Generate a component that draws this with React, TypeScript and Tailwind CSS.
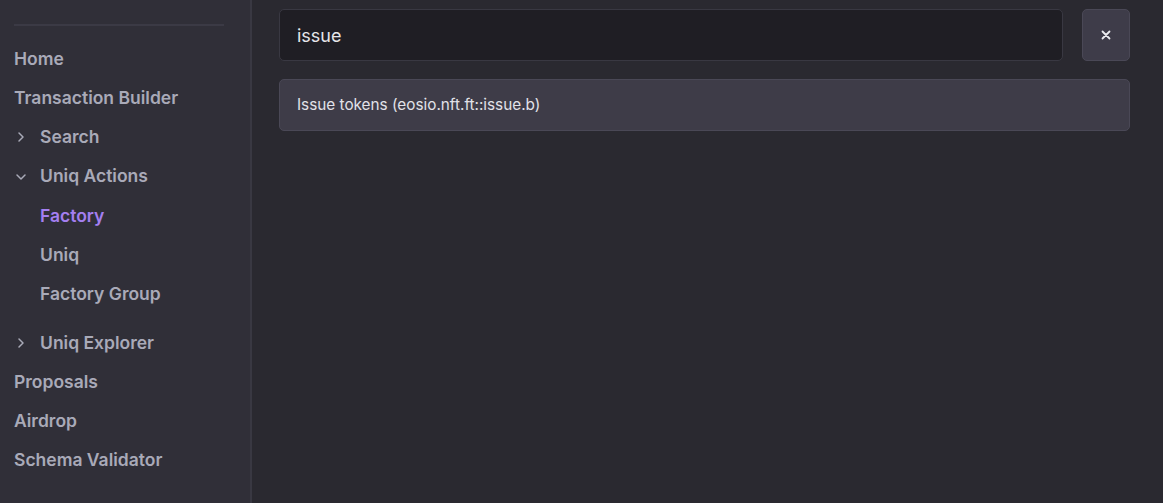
import React from 'react';

type Item = { label: string; level: 0 | 1; chevron?: 'right' | 'down'; active?: boolean; gapAfter?: boolean };

const NAV: Item[] = [
  { label: 'Home', level: 0 },
  { label: 'Transaction Builder', level: 0 },
  { label: 'Search', level: 0, chevron: 'right' },
  { label: 'Uniq Actions', level: 0, chevron: 'down' },
  { label: 'Factory', level: 1, active: true },
  { label: 'Uniq', level: 1 },
  { label: 'Factory Group', level: 1, gapAfter: true },
  { label: 'Uniq Explorer', level: 0, chevron: 'right' },
  { label: 'Proposals', level: 0 },
  { label: 'Airdrop', level: 0 },
  { label: 'Schema Validator', level: 0 },
];

function Chevron({ dir }: { dir: 'right' | 'down' }) {
  return (
    <svg width="14" height="14" viewBox="0 0 14 14" fill="none" className="shrink-0">
      {dir === 'right' ? (
        <path d="M5 3 L9 7 L5 11" stroke="#a9aab8" strokeWidth="1.5" strokeLinecap="round" strokeLinejoin="round" />
      ) : (
        <path d="M3 5 L7 9 L11 5" stroke="#a9aab8" strokeWidth="1.5" strokeLinecap="round" strokeLinejoin="round" />
      )}
    </svg>
  );
}

export default function App() {
  return (
    <div className="flex w-[1163px] h-[503px] bg-[#2a2930] overflow-hidden" style={{ fontFamily: 'Inter, "Noto Sans", sans-serif' }}>
      {/* Sidebar */}
      <aside className="w-[252px] shrink-0 bg-[#302f38] border-r-2 border-[#393842] px-[14px] pt-6">
        <div className="w-[210px] h-[2px] bg-[#3b3a45]" />
        <nav className="mt-[13px]">
          {NAV.map(item => (
            <div
              key={item.label}
              className={`flex items-center h-[39.3px] text-[17.5px] font-semibold ${item.gapAfter ? 'mb-[9px]' : ''} ${
                item.active ? 'text-[#a47ff0]' : 'text-[#a9aab8]'
              } ${item.level === 1 ? 'pl-[26px]' : ''}`}
            >
              {item.chevron && (
                <span className="w-[26px] flex items-center">
                  <Chevron dir={item.chevron} />
                </span>
              )}
              <span>{item.label}</span>
            </div>
          ))}
        </nav>
      </aside>

      {/* Main */}
      <main className="flex-1 pl-[27px] pr-[33px] pt-[9px]">
        <div className="flex gap-[19px]">
          <div className="flex-1 h-[52px] flex items-center px-[17px] bg-[#1f1e24] border border-[#393842] rounded-[5px] text-[18px] text-[#e6e6ea]">
            issue
          </div>
          <button className="w-[48px] h-[52px] flex items-center justify-center bg-[#3e3c49] border border-[#4a4856] rounded-[5px]">
            <svg width="10" height="10" viewBox="0 0 10 10">
              <path d="M1.5 1.5 L8.5 8.5 M8.5 1.5 L1.5 8.5" stroke="#ececf0" strokeWidth="1.8" strokeLinecap="round" />
            </svg>
          </button>
        </div>
        <div className="mt-[18px] h-[52px] flex items-center px-[17px] bg-[#3e3c48] border border-[#4a4856] rounded-[5px] text-[15.3px] text-[#e2e2e8]">
          Issue tokens (eosio.nft.ft::issue.b)
        </div>
      </main>
    </div>
  );
}
